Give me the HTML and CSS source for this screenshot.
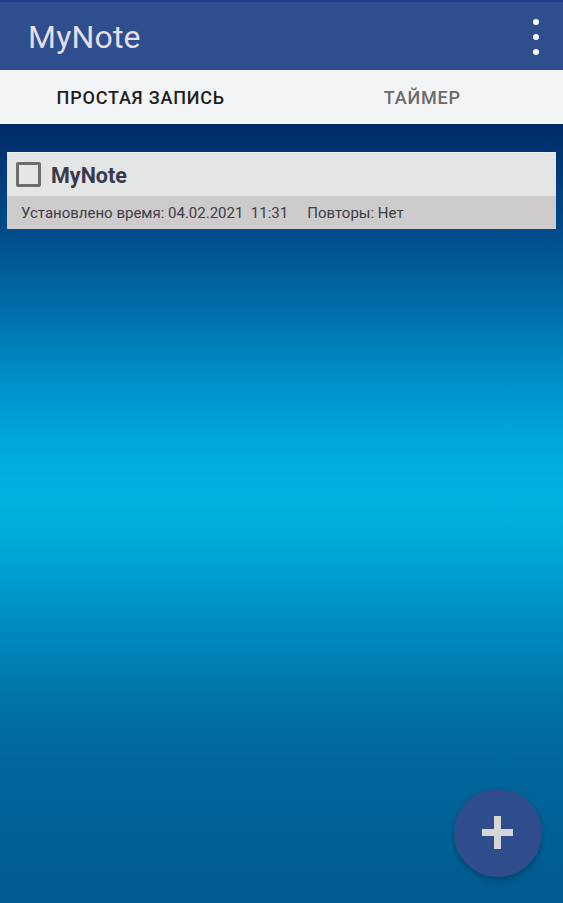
FILE: index.html
```html
<!DOCTYPE html>
<html lang="ru">
<head>
<meta charset="utf-8">
<title>MyNote</title>
<link rel="stylesheet" href="styles.css">
</head>
<body>
<div class="screen">
  <header class="appbar">
    <h1 class="title">MyNote</h1>
    <div class="menu" aria-label="menu"><span></span><span></span><span></span></div>
  </header>
  <nav class="tabs">
    <div class="tab active">ПРОСТАЯ ЗАПИСЬ</div>
    <div class="tab">ТАЙМЕР</div>
  </nav>
  <main class="content">
    <div class="card">
      <div class="card-head">
        <span class="checkbox"></span>
        <span class="card-title">MyNote</span>
      </div>
      <div class="card-sub">
        <span>Установлено время: 04.02.2021&nbsp; 11:31</span>
        <span>Повторы: Нет</span>
      </div>
    </div>
  </main>
  <button class="fab" aria-label="add">
    <svg width="32" height="34" viewBox="0 0 32 34"><rect x="0" y="13" width="31" height="7" fill="#d6d6d6"/><rect x="12" y="0" width="7" height="33" fill="#d6d6d6"/></svg>
  </button>
</div>
</body>
</html>
```

FILE: styles.css
```css
* { box-sizing: border-box; }
html, body { margin: 0; padding: 0; }
body {
  font-family: Roboto, "Noto Sans", "Liberation Sans", sans-serif;
  width: 563px;
  height: 903px;
  overflow: hidden;
}
.screen {
  position: relative;
  width: 563px;
  height: 903px;
  display: flex;
  flex-direction: column;
  background: linear-gradient(to bottom,
    #00235f 0px,
    #002a68 125px,
    #003c79 175px,
    #004b88 230px,
    #0068a5 297px,
    #0088c0 363px,
    #00a5d8 430px,
    #00b3de 497px,
    #00acd9 535px,
    #00a0d0 570px,
    #008abf 630px,
    #0074a8 697px,
    #00679c 760px,
    #005a91 903px);
}
.appbar {
  height: 70px;
  background: #2f4e8e;
  border-top: 2px solid #1c3f8f;
  display: flex;
  align-items: center;
  justify-content: space-between;
  padding: 0 24px 0 28px;
}
.title {
  margin: 0;
  font-weight: 400;
  font-size: 32px;
  color: #e2dfe7;
  letter-spacing: 0.2px;
  padding-top: 1px;
}
.menu {
  display: flex;
  flex-direction: column;
  gap: 9px;
  align-items: center;
  width: 6px;
  padding-top: 1px;
}
.menu span {
  width: 6px;
  height: 6px;
  border-radius: 50%;
  background: #ffffff;
}
.tabs {
  height: 54px;
  background: #f3f4f6;
  display: flex;
}
.tab {
  flex: 1;
  display: flex;
  align-items: center;
  justify-content: center;
  font-size: 18px;
  font-weight: 500;
  letter-spacing: 0.8px;
  color: #6b6b6b;
  padding-top: 1px;
}
.tab.active { color: #1e1e1e; }
.content {
  flex: 1;
  padding: 28px 7px 0 7px;
}
.card {
  background: #e4e5e5;
  border-top: 1px solid #eef0f2;
}
.card-head {
  height: 43px;
  display: flex;
  align-items: center;
  gap: 10px;
  padding-left: 9px;
}
.checkbox {
  width: 25px;
  height: 25px;
  border: 3px solid #6d6d6d;
  border-radius: 2px;
  background: #e6e6e6;
}
.card-title {
  font-size: 21.5px;
  font-weight: 700;
  color: #363a4a;
  padding-top: 2px;
}
.card-sub {
  height: 33px;
  background: #cdcbcc;
  display: flex;
  align-items: center;
  gap: 19px;
  padding-left: 14px;
  font-size: 15px;
  color: #3d3e47;
  padding-top: 1px;
}
.fab {
  position: absolute;
  left: 454px;
  top: 789px;
  width: 88px;
  height: 88px;
  border-radius: 50%;
  border: none;
  background: #2f4c8c;
  box-shadow: 0 3px 6px rgba(0,0,0,0.25);
  display: flex;
  align-items: center;
  justify-content: center;
  padding: 0;
}
```
